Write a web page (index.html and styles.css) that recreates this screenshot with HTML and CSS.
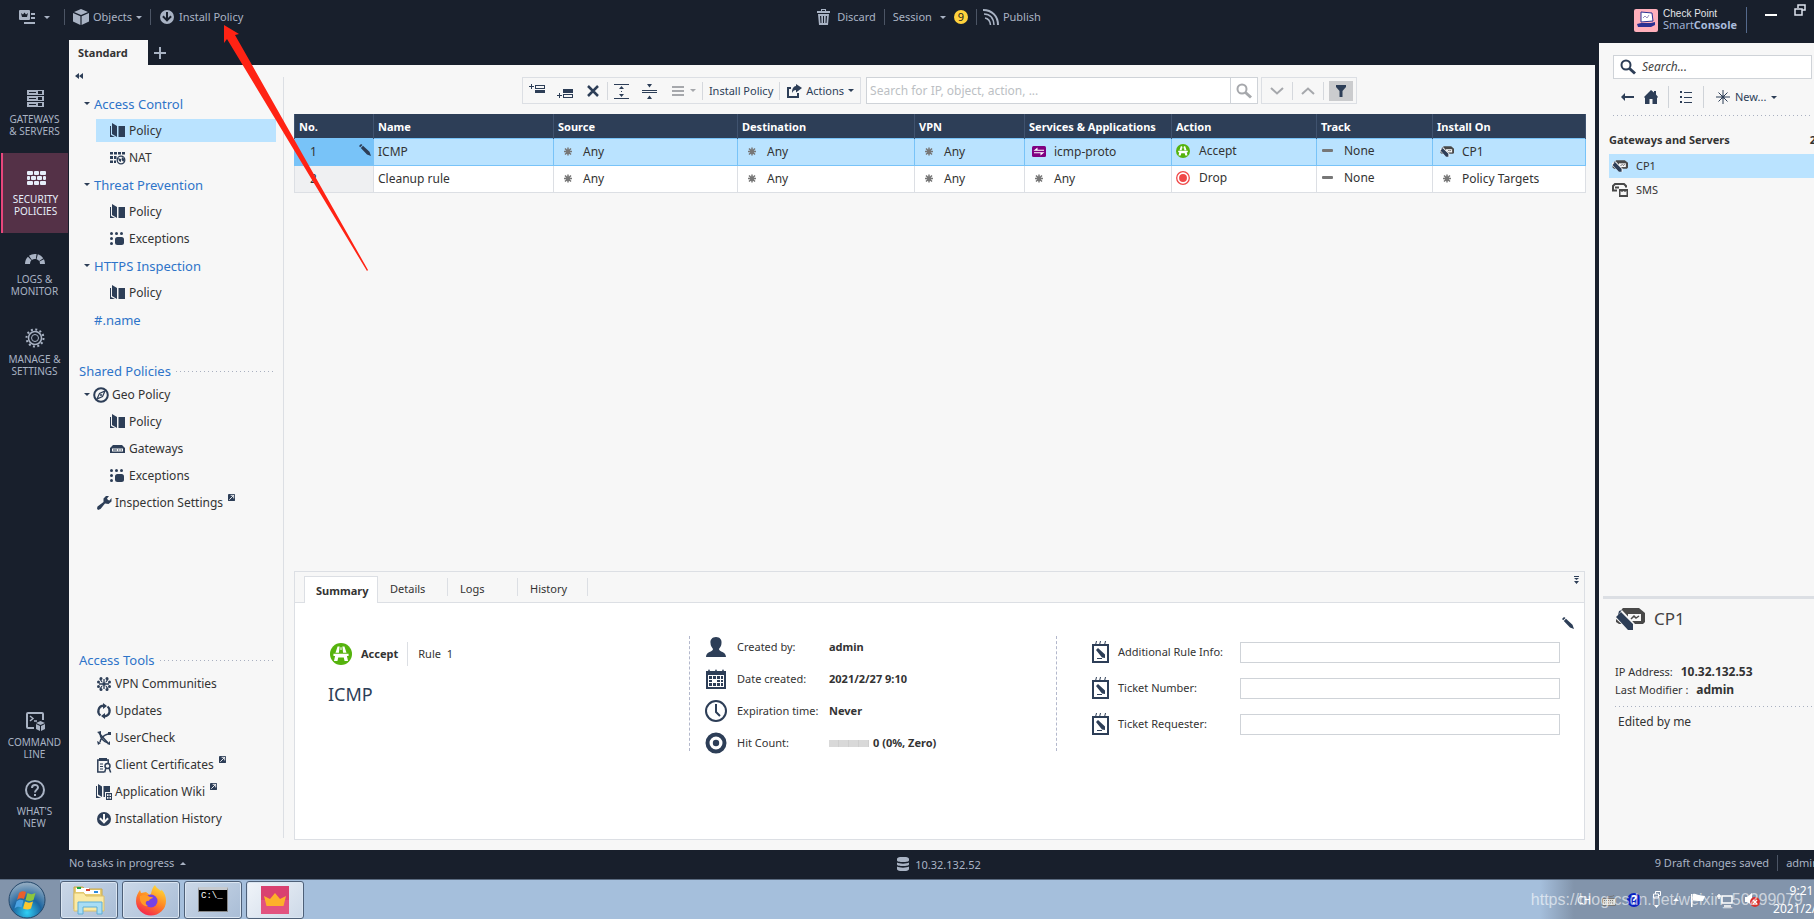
FILE: index.html
```html
<!doctype html>
<html lang="en">
    <head>
        <meta charset="utf-8">
        <title>SmartConsole</title>
        <link rel="stylesheet" href="styles.css">
    </head>
    <body>
        <!-- icon sprite -->
        <svg class="sprite" aria-hidden="true">
            <symbol id="i-menu" viewBox="0 0 16 15"><path fill="currentColor" fill-rule="evenodd" d="M1 0h9a1 1 0 0 1 1 1v8a1 1 0 0 1-1 1H1a1 1 0 0 1-1-1V1a1 1 0 0 1 1-1zm1 3 1 4h5l1-4-2 1.500-1.500-2L4 4.500zM12 3h4v2h-4zM12 7h4v2h-4zM5 12h11v2H5z"/></symbol>
            <symbol id="i-cube" viewBox="0 0 16 16"><path fill="currentColor" d="M8 0l7 3-7 3-7-3zM0 4l7.400 3.300V16L0 12.500zM16 4 8.600 7.300V16l7.400-3.500z"/></symbol>
            <symbol id="i-install" viewBox="0 0 16 16"><path fill="currentColor" fill-rule="evenodd" d="M8 1a7 7 0 1 0 0 14A7 7 0 0 0 8 1zM7 3h2v6l2.400-2.400 1.400 1.400L8 12.800 3.200 8l1.400-1.400L7 9z"/></symbol>
            <symbol id="i-trash" viewBox="0 0 13 16"><path fill="currentColor" fill-rule="evenodd" d="M4 2V0h5v2h4v2H0V2zm1 0h3V1H5zM1 5h11l-1 11H2zm2 2 .5 7h1L4.200 7zm3 0v7h1V7zm2.800 0-.3 7h1L10 7z"/></symbol>
            <symbol id="i-publish" viewBox="0 0 16 16"><g fill="none" stroke="currentColor" stroke-width="2"><path d="M0 1c9 0 15 6 15 15"/><path d="M1 5c6 0 9.500 4 10 11" stroke-width="1.500"/><path d="M2 9c3 .5 5 2 5.500 7" stroke-width="1.500"/></g></symbol>
            <symbol id="i-servers" viewBox="0 0 22 22"><path fill="currentColor" fill-rule="evenodd" d="M3 3h17v5H3zm2 2v1h7V5zm9-1v3h4V4zM3 9h17v5H3zm2 2v1h7v-1zm9-1v3h4v-3zM3 15h17v5H3zm2 2v1h7v-1zm9-1v3h4v-3z"/></symbol>
            <symbol id="i-wall" viewBox="0 0 22 22"><g fill="currentColor"><rect x="2" y="4" width="6" height="4" rx="1"/><rect x="9" y="4" width="5" height="4" rx="1"/><rect x="15" y="4" width="6" height="4" rx="1"/><rect x="2" y="9" width="3" height="4" rx="1"/><rect x="6" y="9" width="5" height="4" rx="1"/><rect x="12" y="9" width="5" height="4" rx="1"/><rect x="18" y="9" width="3" height="4" rx="1"/><rect x="2" y="14" width="6" height="4" rx="1"/><rect x="9" y="14" width="5" height="4" rx="1"/><rect x="15" y="14" width="6" height="4" rx="1"/></g></symbol>
            <symbol id="i-gauge" viewBox="0 0 22 22"><path fill="none" stroke="currentColor" stroke-width="5" stroke-dasharray="6 1 6 1 5 1 20" d="M3.500 17c0-10 15-10 15 0"/></symbol>
            <symbol id="i-gear" viewBox="0 0 22 22"><g fill="none" stroke="currentColor"><circle cx="11" cy="11" r="8.500" stroke-width="2" stroke-dasharray="2 2.450"/><circle cx="11" cy="11" r="6.500" stroke-width="1.500"/><circle cx="11" cy="11" r="3.500"/></g></symbol>
            <symbol id="i-cmd" viewBox="0 0 22 22"><path fill="none" stroke="currentColor" stroke-width="2" d="M10 18H4a1 1 0 0 1-1-1V4a1 1 0 0 1 1-1h14a1 1 0 0 1 1 1v6"/><path fill="none" stroke="currentColor" stroke-width="1.500" d="m6 6 3 2.500L6 11M10 11h3"/><path fill="currentColor" d="m16.500 11 4.500 2-4.500 2-4.500-2zM12 14l4 2v5l-4-2zM21 14l-4 2v5l4-2z"/></symbol>
            <symbol id="i-help" viewBox="0 0 22 22"><g fill="none" stroke="currentColor" stroke-width="2"><circle cx="11" cy="11" r="9"/><path d="M8 9c0-4 6-4 6-.5 0 2.500-3 2-3 5M11 15v2"/></g></symbol>
            <symbol id="i-policy" viewBox="0 0 16 16"><path fill="currentColor" d="M2 0l5 3v11L2 11zM8.500 3H15v11H8.500zM0 3h1v9l4 2H0z"/></symbol>
            <symbol id="i-nat" viewBox="0 0 16 16"><g fill="currentColor"><path d="M0 2h3v2.500H0zM4 2h3v2.500H4zM8 2h3v2.500H8zM12 2h3v2.500h-3zM0 6h3v3H0zM4 6h2.500v3H4zM0 10.500h3V13H0zM4 10.500h2V13H4z"/></g><circle cx="11" cy="10" r="3.800" fill="none" stroke="currentColor" stroke-width="1.300"/><path fill="currentColor" d="M8 8l3 1v3l-2-1zM12 7l2.500 2-1 3-2-2z"/></symbol>
            <symbol id="i-exc" viewBox="0 0 16 16"><g fill="currentColor"><circle cx="1.500" cy="2.500" r="1.500"/><circle cx="6.500" cy="2.500" r="1.500"/><circle cx="11.500" cy="2.500" r="1.500"/><circle cx="1.500" cy="7.500" r="1.500"/><circle cx="1.500" cy="12.500" r="1.500"/><rect x="5" y="6" width="9" height="8" rx="2.500"/></g></symbol>
            <symbol id="i-geo" viewBox="0 0 16 16"><circle cx="8" cy="8" r="6.800" fill="none" stroke="currentColor" stroke-width="2"/><path fill="none" stroke="currentColor" stroke-width="1.200" d="m12 4-2.500 5.500L4 12l2.500-5.500z"/><circle cx="8" cy="8" r="1" fill="currentColor"/></symbol>
            <symbol id="i-gw" viewBox="0 0 16 16"><path fill="currentColor" fill-rule="evenodd" d="M3 4h9l3 3v5H0V7zM2 7.500v3h11v-3zM3 8.500h4v1H3zM8 8.500h1.500v1H8zM10.500 8.500H12v1h-1.500z"/></symbol>
            <symbol id="i-wrench" viewBox="0 0 16 16"><path fill="currentColor" d="M10 1h3l-2 2.500 1 1.500 1.500.5L15.500 3v3.500L12.500 9 9 8.500 4.500 14 2 15 1 13.500 1.500 11.500 7.500 7V3.500z"/></symbol>
            <symbol id="i-ext" viewBox="0 0 8 8"><path fill="currentColor" d="M1 0h6a1 1 0 0 1 1 1v6a1 1 0 0 1-1 1H1a1 1 0 0 1-1-1V1a1 1 0 0 1 1-1z"/><path stroke="#fff" fill="none" d="M3 1.500h3.500V5M6.500 1.500l-5 5"/></symbol>
            <symbol id="i-vpn" viewBox="0 0 16 16"><g fill="none" stroke="currentColor" stroke-width="1.300"><path d="M8 6V3M8 10v3M6 8H3M10 8h3M6 6 4 3M10 6l2-3M6 10l-2 3M10 10l2 3"/></g><g fill="currentColor"><circle cx="8" cy="8" r="2"/><circle cx="5" cy="2.500" r="1.500"/><circle cx="11" cy="2.500" r="1.500"/><circle cx="2.500" cy="6" r="1.500"/><circle cx="13.500" cy="6" r="1.500"/><circle cx="2.500" cy="10.500" r="1.500"/><circle cx="13.500" cy="10.500" r="1.500"/><circle cx="5" cy="13.500" r="1.500"/><circle cx="11" cy="13.500" r="1.500"/></g></symbol>
            <symbol id="i-upd" viewBox="0 0 16 16"><path fill="none" stroke="currentColor" stroke-width="2.200" d="M4.500 12.500A5.500 5.500 0 0 1 7 2.700M11.500 3.500A5.500 5.500 0 0 1 9 13.300"/><path fill="currentColor" d="M7 0l4 3-4 3zM9 10v6l-4-3z"/></symbol>
            <symbol id="i-uc" viewBox="0 0 16 16"><g fill="none" stroke="currentColor" stroke-width="1.500"><path d="M4 3c0 5 4 9 8 10M12 4C8 5 5 8 4 12"/><path d="M3 3l9 10"/></g><path fill="currentColor" d="M1 2l4-1v4zM12 2h3v3h-3zM1 11l4 2-3 2zM11 14l3-3v4z"/></symbol>
            <symbol id="i-cert" viewBox="0 0 16 16"><path fill="none" stroke="currentColor" stroke-width="1.500" d="M8 15H1.800V3h10.400v3"/><path fill="currentColor" d="M3 1h8v3H3zM4 6.500h3v1H4zM4 9h3v1H4zM4 11.500h3v1H4z"/><circle cx="11.500" cy="9" r="2.500" fill="none" stroke="currentColor" stroke-width="1.500"/><path fill="none" stroke="currentColor" stroke-width="1.500" d="m10 11-1.500 4.500M13 11l1.700 4.500"/></symbol>
            <symbol id="i-wiki" viewBox="0 0 16 16"><path fill="currentColor" d="M2 0l4 2.500V13L2 10.500zM0 2h1v10l4 2H0zM7.500 2H14v6H9v5H7.500z"/><path fill="currentColor" fill-rule="evenodd" d="M10 9h6v7h-6zm1 1.200v1.800h1.500v-1.800zm2.500 0v1.800H15v-1.800zM11 13v1.800h1.500V13zm2.500 0v1.800H15V13z"/></symbol>
            <symbol id="i-any" viewBox="0 0 14 11"><path stroke="currentColor" stroke-width="1.500" d="M7 1.500v8M3 5.500h8M4 2.500l6 6M10 2.500l-6 6"/></symbol>
            <symbol id="i-accept" viewBox="0 0 16 16"><circle cx="8" cy="8" r="8" fill="#55b30d"/><path fill="#fff" d="M5.500 2.500H7L6.500 7H4zM10.500 2.500H9L9.500 7H12zM7.600 3h.8v2h-.8zM2.500 7.800h11v1.700h-1.200l.8 3.500h-2.500L10 10.500H6L5.400 13H2.900l.8-3.500H2.500z"/></symbol>
            <symbol id="i-drop" viewBox="0 0 16 16"><circle cx="8" cy="8" r="7.200" fill="#fff" stroke="#f04848" stroke-width="1.500"/><circle cx="8" cy="8" r="4.500" fill="#f04848"/></symbol>
            <symbol id="i-icmp" viewBox="0 0 14 11"><rect width="14" height="11" rx="1.500" fill="#800080"/><path fill="#fff" d="M1.500 4.700 5.500 1.500v2.200H12v1H1.500zM12.500 6.300l-4 3.200V7.300H2v-1z"/></symbol>
            <symbol id="i-cp" viewBox="0 0 30 22"><path fill="#494949" d="M8 0h16l6 5v9l-2 2H4l-3-2V7z"/><path fill="#f7f7f7" d="M13 6h13v7H13z"/><path stroke="#494949" fill="none" stroke-width="1.500" d="m16 11 3-3 2 2 3-2"/><path fill="#f7f7f7" d="M0 6l6-5 14 15v6h-7L0 10z"/><path fill="#2d3e57" d="M1 9l5-5 12 12v6h-5zM4 3l3-1-4 5z"/></symbol>
            <symbol id="i-sms" viewBox="0 0 16 14"><path fill="none" stroke="#494949" stroke-width="2" d="M5 7.500H1V3l2-2h9l2 2v1.500M3 4.500h4"/><path fill="#494949" fill-rule="evenodd" d="M6.500 6H16v8H7V6zm2 2v4h6V8l-1.500 1-1.500-1-1.500 1z"/></symbol>
            <symbol id="i-pencil" viewBox="0 0 12 12"><path fill="currentColor" d="M0 2 2 0l1.500 1-2.300 2.300zM1.800 4 4 1.800l6.500 6L12 12 8 10.500z"/></symbol>
            <symbol id="i-addup" viewBox="0 0 16 16"><path fill="currentColor" fill-rule="evenodd" d="M2 1h1v2h2v1H3v2H2V4H0V3h2zM6 2h10v4H6zm1 1v2h8V3zM6 7h10v3H6z"/></symbol>
            <symbol id="i-adddn" viewBox="0 0 16 16"><path fill="currentColor" fill-rule="evenodd" d="M2 10h1v2h2v1H3v2H2v-2H0v-1h2zM6 6h10v4H6zM6 11h10v4H6zm1 1v2h8v-2z"/></symbol>
            <symbol id="i-x" viewBox="0 0 16 16"><path stroke="currentColor" stroke-width="2.500" d="m3 3 10 10M13 3 3 13"/></symbol>
            <symbol id="i-expand" viewBox="0 0 16 16"><path fill="currentColor" d="M0 1h15v1H0zM0 15h15v1H0zM5 6l2.500-3L10 6zM5 11l2.500 3 2.500-3zM7 8h1v1H7z"/></symbol>
            <symbol id="i-collapse" viewBox="0 0 16 16"><path fill="currentColor" d="M0 7h15v1H0zM0 9h15v1H0zM5 1h5L7.500 4.500zM5 16h5l-2.500-3.500z"/></symbol>
            <symbol id="i-lines" viewBox="0 0 16 16"><path fill="currentColor" d="M2 3h12v2H2zM2 7h12v2H2zM2 11h12v2H2z"/></symbol>
            <symbol id="i-share" viewBox="0 0 16 16"><path fill="none" stroke="currentColor" stroke-width="2" d="M5 5H2v9h10v-4"/><path fill="currentColor" d="M10 1l6 4-6 4.500V7C8 7 7 8 6 10c0-4 1-6.500 4-7z"/></symbol>
            <symbol id="i-glass" viewBox="0 0 16 16"><circle cx="6" cy="6" r="4.500" fill="none" stroke="currentColor" stroke-width="2"/><path stroke="currentColor" stroke-width="3" d="m9.500 9.500 5.500 5"/></symbol>
            <symbol id="i-down" viewBox="0 0 14 14"><path fill="none" stroke="currentColor" stroke-width="2" d="m1 4 6 5.500L13 4"/></symbol>
            <symbol id="i-up" viewBox="0 0 14 14"><path fill="none" stroke="currentColor" stroke-width="2" d="m1 10 6-5.500 6 5.500"/></symbol>
            <symbol id="i-filter" viewBox="0 0 14 14"><path fill="currentColor" d="M2 1h10v2L8.500 7v6h-3V7L2 3z"/></symbol>
            <symbol id="i-back" viewBox="0 0 14 14"><path fill="currentColor" d="M5 3v3h9v2H5v3L1 7z"/></symbol>
            <symbol id="i-home" viewBox="0 0 14 14"><path fill="currentColor" fill-rule="evenodd" d="M7 0l3 2.500V1h2v3.500L14 7l-1 1v6H1V8L0 7zM5.500 9v5h3V9z"/></symbol>
            <symbol id="i-list" viewBox="0 0 14 14"><path fill="currentColor" d="M1 1h2v2H1zM5 2h8v1H5zM1 6h2v2H1zM5 7h8v1H5zM1 11h2v2H1zM5 12h8v1H5z"/></symbol>
            <symbol id="i-new" viewBox="0 0 14 14"><path stroke="currentColor" d="M7 0v14M0 7h14M2.500 2.500l9 9M11.500 2.500l-9 9"/><circle cx="7" cy="7" r="1.500" fill="currentColor"/></symbol>
            <symbol id="i-user" viewBox="0 0 22 22"><path fill="currentColor" d="M11 1c4 0 6 3 5.500 6 0 3-1.500 4-2.500 6 0 3 7 2.500 7 8H1c0-5.500 7-5 7-8-1-2-2.500-3-2.500-6C5 4 7 1 11 1z"/></symbol>
            <symbol id="i-cal" viewBox="0 0 22 22"><path fill="currentColor" d="M1 3h2l1-2 1 2h5l1-2 1 2h5l1-2 1 2h2v18H1z"/><path fill="#fff" d="M3 7h16v12H3z"/><path fill="currentColor" d="M4 8h3v3H4zM8 8h3v3H8zM12 8h3v3h-3zM16 8h2v3h-2zM4 12h3v2H4zM12 12h3v2h-3zM16 12h2v2h-2zM4 15h3v3H4zM8 15h3v3H8zM12 15h3v3h-3zM16 15h2v3h-2z"/></symbol>
            <symbol id="i-clock" viewBox="0 0 22 22"><circle cx="11" cy="11" r="10" fill="none" stroke="currentColor" stroke-width="2"/><path fill="none" stroke="currentColor" stroke-width="2" d="M11 4v8l4 4"/></symbol>
            <symbol id="i-target" viewBox="0 0 22 22"><circle cx="11" cy="11" r="8.500" fill="none" stroke="currentColor" stroke-width="4"/><circle cx="11" cy="11" r="3.200" fill="currentColor"/></symbol>
            <symbol id="i-note" viewBox="0 0 18 22"><path fill="none" stroke="currentColor" stroke-width="2" d="M1 3v18h15V3M1 4h15"/><path stroke="currentColor" d="m4.500 0-1 4M8.500 0l-1 4M13.500 0l-1 4"/><path fill="currentColor" d="M4 9l2-2 7 6.500V17l-3-.5zM5 17h5v1H5z"/></symbol>
            <symbol id="i-db" viewBox="0 0 12 14"><path fill="currentColor" d="M0 2c0-3 12-3 12 0v1.500c0 2-12 2-12 0zM0 5.500c2 1.500 10 1.500 12 0v2c0 2-12 2-12 0zM0 9.500c2 1.500 10 1.500 12 0V12c0 3-12 3-12 0z"/></symbol>
            <symbol id="i-crown" viewBox="0 0 28 28"><path fill="#d94070" d="M0 0h28v14H0z"/><path fill="#e2527f" d="M0 14h28v14H0z"/><path fill="#fdb02a" d="M3 10l6 3 5-6 5 6 6-3-2.500 10h-17z"/></symbol>
        </svg>

        <header class="topbar">
            <div class="topbar-group">
                <button class="top-btn menu" aria-label="Menu"><svg width="16" height="15"><use href="#i-menu"/></svg><i class="caret"></i></button>
                <span class="sep"></span>
                <button class="top-btn"><svg width="16" height="16"><use href="#i-cube"/></svg>Objects<i class="caret"></i></button>
                <span class="sep"></span>
                <button class="top-btn"><svg width="16" height="16"><use href="#i-install"/></svg>Install Policy</button>
            </div>
            <div class="topbar-group session-bar">
                <button class="top-btn discard"><svg width="13" height="16"><use href="#i-trash"/></svg>Discard</button>
                <span class="sep"></span>
                <button class="top-btn session">Session<i class="caret"></i></button>
                <span class="count">9</span>
                <span class="sep"></span>
                <button class="top-btn publish"><svg width="16" height="16"><use href="#i-publish"/></svg>Publish</button>
            </div>
            <div class="topbar-group brand">
                <svg width="24" height="23" viewBox="0 0 24 23"><rect width="24" height="23" rx="2" fill="#ffafbb"/><path fill="#fff" stroke="#2b3092" d="m7 3 11 1 1 8-12 1z"/><path fill="#2b3092" d="m3 15 4-1h10l4-1v3l-4 2H4z"/><path stroke="#9b90c0" fill="none" d="m9 9 2-2 2 2 2-3"/></svg>
                <div class="brand-name"><div class="brand-top">Check Point</div><div class="brand-sub">Smart<b>Console</b></div></div>
                <span class="brand-sep"></span>
                <button class="win-btn" aria-label="Minimize"><svg width="12" height="12"><path fill="#fff" d="M0 8h12v2H0z"/></svg></button>
                <button class="win-btn" aria-label="Restore"><svg width="12" height="12"><path fill="none" stroke="#dde4ee" stroke-width="1.500" d="M4 4V1h7v5H8M1 5h7v6H1z"/></svg></button>
            </div>
        </header>

        <div class="app">
            <nav class="rail">
                <a class="rail-item" href="#"><svg width="22" height="22"><use href="#i-servers"/></svg>GATEWAYS<br>&amp; SERVERS</a>
                <a class="rail-item active" href="#"><svg width="22" height="22"><use href="#i-wall"/></svg>SECURITY<br>POLICIES</a>
                <a class="rail-item" href="#"><svg width="22" height="22"><use href="#i-gauge"/></svg>LOGS &amp;<br>MONITOR</a>
                <a class="rail-item" href="#"><svg width="22" height="22"><use href="#i-gear"/></svg>MANAGE &amp;<br>SETTINGS</a>
                <div class="rail-bottom">
                    <a class="rail-item" href="#"><svg width="22" height="22"><use href="#i-cmd"/></svg>COMMAND<br>LINE</a>
                    <a class="rail-item" href="#"><svg width="22" height="22"><use href="#i-help"/></svg>WHAT'S<br>NEW</a>
                </div>
            </nav>

            <main class="center">
                <div class="tabs">
                    <button class="tab">Standard</button>
                    <button class="tab-add" aria-label="New tab"><svg width="12" height="12"><path fill="currentColor" d="M5 0h2v5h5v2H7v5H5V7H0V5h5z"/></svg></button>
                </div>
                <div class="workspace">
                    <aside class="tree">
                        <button class="collapse" aria-label="Collapse"><svg width="8" height="6"><path fill="currentColor" d="M4 0v6L0 3zM8 0v6L4 3z"/></svg></button>
                        <div class="tree-group">
                            <a class="node top" href="#"><i class="caret"></i>Access Control</a>
                            <a class="node leaf selected" href="#"><svg class="ico"><use href="#i-policy"/></svg>Policy</a>
                            <a class="node leaf" href="#"><svg class="ico"><use href="#i-nat"/></svg>NAT</a>
                            <a class="node top" href="#"><i class="caret"></i>Threat Prevention</a>
                            <a class="node leaf" href="#"><svg class="ico"><use href="#i-policy"/></svg>Policy</a>
                            <a class="node leaf" href="#"><svg class="ico"><use href="#i-exc"/></svg>Exceptions</a>
                            <a class="node top" href="#"><i class="caret"></i>HTTPS Inspection</a>
                            <a class="node leaf" href="#"><svg class="ico"><use href="#i-policy"/></svg>Policy</a>
                            <a class="node top plain" href="#">#.name</a>
                        </div>
                        <div class="tree-group shared">
                            <h2>Shared Policies</h2>
                            <a class="node mid open" href="#"><i class="caret"></i><svg class="ico"><use href="#i-geo"/></svg>Geo Policy</a>
                            <a class="node leaf" href="#"><svg class="ico"><use href="#i-policy"/></svg>Policy</a>
                            <a class="node leaf" href="#"><svg class="ico"><use href="#i-gw"/></svg>Gateways</a>
                            <a class="node leaf" href="#"><svg class="ico"><use href="#i-exc"/></svg>Exceptions</a>
                            <a class="node mid" href="#"><svg class="ico"><use href="#i-wrench"/></svg>Inspection Settings<svg class="ext"><use href="#i-ext"/></svg></a>
                        </div>
                        <div class="tree-group tools">
                            <h2>Access Tools</h2>
                            <a class="node mid" href="#"><svg class="ico"><use href="#i-vpn"/></svg>VPN Communities</a>
                            <a class="node mid" href="#"><svg class="ico"><use href="#i-upd"/></svg>Updates</a>
                            <a class="node mid" href="#"><svg class="ico"><use href="#i-uc"/></svg>UserCheck</a>
                            <a class="node mid" href="#"><svg class="ico"><use href="#i-cert"/></svg>Client Certificates<svg class="ext"><use href="#i-ext"/></svg></a>
                            <a class="node mid" href="#"><svg class="ico"><use href="#i-wiki"/></svg>Application Wiki<svg class="ext"><use href="#i-ext"/></svg></a>
                            <a class="node mid" href="#"><svg class="ico"><use href="#i-install"/></svg>Installation History</a>
                        </div>
                    </aside>

                    <section class="policy">
                        <div class="toolbar">
                            <div class="tool-group">
                                <button aria-label="Add rule above"><svg class="ico"><use href="#i-addup"/></svg></button>
                                <button aria-label="Add rule below"><svg class="ico"><use href="#i-adddn"/></svg></button>
                                <button aria-label="Delete rule"><svg class="ico"><use href="#i-x"/></svg></button>
                                <span class="sep"></span>
                                <button aria-label="Expand"><svg class="ico"><use href="#i-expand"/></svg></button>
                                <button aria-label="Collapse"><svg class="ico"><use href="#i-collapse"/></svg></button>
                                <button class="muted" aria-label="Display"><svg class="ico"><use href="#i-lines"/></svg><i class="caret"></i></button>
                                <span class="sep"></span>
                                <button>Install Policy</button>
                                <span class="sep"></span>
                                <button><svg class="ico"><use href="#i-share"/></svg>Actions<i class="caret"></i></button>
                            </div>
                            <div class="rule-search">
                                <input type="text" aria-label="Search rules" placeholder="Search for IP, object, action, ...">
                                <button aria-label="Search"><svg class="ico"><use href="#i-glass"/></svg></button>
                            </div>
                            <div class="nav-group">
                                <button aria-label="Next"><svg width="14" height="14"><use href="#i-down"/></svg></button>
                                <span class="sep"></span>
                                <button aria-label="Previous"><svg width="14" height="14"><use href="#i-up"/></svg></button>
                                <span class="sep"></span>
                                <button class="on" aria-label="Filter"><svg width="14" height="14"><use href="#i-filter"/></svg></button>
                            </div>
                        </div>

                        <table class="rules">
                            <colgroup><col class="c-no"><col class="c-name"><col class="c-src"><col class="c-dst"><col class="c-vpn"><col class="c-svc"><col class="c-act"><col class="c-trk"><col class="c-ins"></colgroup>
                            <thead>
                                <tr><th>No.</th><th>Name</th><th>Source</th><th>Destination</th><th>VPN</th><th>Services &amp; Applications</th><th>Action</th><th>Track</th><th>Install On</th></tr>
                            </thead>
                            <tbody>
                                <tr class="selected">
                                    <td><div class="num">1<svg width="12" height="12"><use href="#i-pencil"/></svg></div></td>
                                    <td>ICMP</td>
                                    <td><div class="cell"><svg class="any"><use href="#i-any"/></svg>Any</div></td>
                                    <td><div class="cell"><svg class="any"><use href="#i-any"/></svg>Any</div></td>
                                    <td><div class="cell"><svg class="any"><use href="#i-any"/></svg>Any</div></td>
                                    <td><div class="cell"><svg class="any"><use href="#i-icmp"/></svg>icmp-proto</div></td>
                                    <td><div class="cell act"><svg class="dot"><use href="#i-accept"/></svg>Accept</div></td>
                                    <td><div class="cell trk"><i class="dash"></i>None</div></td>
                                    <td><div class="cell"><svg class="any"><use href="#i-cp"/></svg>CP1</div></td>
                                </tr>
                                <tr>
                                    <td><div class="num">2</div></td>
                                    <td>Cleanup rule</td>
                                    <td><div class="cell"><svg class="any"><use href="#i-any"/></svg>Any</div></td>
                                    <td><div class="cell"><svg class="any"><use href="#i-any"/></svg>Any</div></td>
                                    <td><div class="cell"><svg class="any"><use href="#i-any"/></svg>Any</div></td>
                                    <td><div class="cell"><svg class="any"><use href="#i-any"/></svg>Any</div></td>
                                    <td><div class="cell act"><svg class="dot"><use href="#i-drop"/></svg>Drop</div></td>
                                    <td><div class="cell trk"><i class="dash"></i>None</div></td>
                                    <td><div class="cell"><svg class="any"><use href="#i-any"/></svg>Policy Targets</div></td>
                                </tr>
                            </tbody>
                        </table>

                        <div class="details">
                            <div class="detail-tabs">
                                <button class="dtab active">Summary</button>
                                <button class="dtab">Details</button>
                                <button class="dtab">Logs</button>
                                <button class="dtab">History</button>
                                <button class="fold" aria-label="Collapse panel"><svg width="7" height="8"><path fill="currentColor" d="M1 0h5v1H1zM1 2h5L3.500 4zM1 5h5L3.500 8z"/></svg></button>
                            </div>
                            <div class="detail-body">
                                <div class="summary">
                                    <div class="verdict"><svg width="22" height="22"><use href="#i-accept"/></svg><b>Accept</b><span>Rule&nbsp; 1</span></div>
                                    <h1>ICMP</h1>
                                </div>
                                <dl class="facts">
                                    <div><svg width="22" height="22"><use href="#i-user"/></svg><dt>Created by:</dt><dd>admin</dd></div>
                                    <div><svg width="22" height="22"><use href="#i-cal"/></svg><dt>Date created:</dt><dd>2021/2/27 9:10</dd></div>
                                    <div><svg width="22" height="22"><use href="#i-clock"/></svg><dt>Expiration time:</dt><dd>Never</dd></div>
                                    <div><svg width="22" height="22"><use href="#i-target"/></svg><dt>Hit Count:</dt><dd><i class="hits"></i>0 (0%, Zero)</dd></div>
                                </dl>
                                <form class="ticket">
                                    <div><svg width="18" height="22"><use href="#i-note"/></svg><label for="info">Additional Rule Info:</label><input id="info" type="text"></div>
                                    <div><svg width="18" height="22"><use href="#i-note"/></svg><label for="number">Ticket Number:</label><input id="number" type="text"></div>
                                    <div><svg width="18" height="22"><use href="#i-note"/></svg><label for="requester">Ticket Requester:</label><input id="requester" type="text"></div>
                                </form>
                                <button class="edit" aria-label="Edit"><svg width="12" height="12"><use href="#i-pencil"/></svg></button>
                            </div>
                        </div>
                    </section>
                </div>
            </main>

            <aside class="objects">
                <div class="objects-list">
                    <div class="obj-search"><svg class="ico"><use href="#i-glass"/></svg><input type="text" aria-label="Search objects" placeholder="Search..."></div>
                    <div class="obj-tools">
                        <button aria-label="Back"><svg width="14" height="14"><use href="#i-back"/></svg></button>
                        <button aria-label="Home"><svg width="14" height="14"><use href="#i-home"/></svg></button>
                        <span class="sep"></span>
                        <button aria-label="List"><svg width="14" height="14"><use href="#i-list"/></svg></button>
                        <span class="sep"></span>
                        <button class="new"><svg width="14" height="14"><use href="#i-new"/></svg>New...<i class="caret"></i></button>
                    </div>
                    <div class="dots"></div>
                    <div class="obj-head"><span>Gateways and Servers</span><span>2</span></div>
                    <a class="obj selected" href="#"><svg class="ico"><use href="#i-cp"/></svg>CP1</a>
                    <a class="obj" href="#"><svg class="ico"><use href="#i-sms"/></svg>SMS</a>
                </div>
                <div class="obj-info">
                    <div class="obj-title"><svg width="30" height="22"><use href="#i-cp"/></svg>CP1</div>
                    <p>IP Address: <b>10.32.132.53</b></p>
                    <p>Last Modifier : <b>admin</b></p>
                    <div class="dots"></div>
                    <p class="edited">Edited by me</p>
                </div>
            </aside>
        </div>

        <footer class="status">
            <button class="tasks">No tasks in progress<i class="caret up"></i></button>
            <span class="server"><svg width="12" height="14"><use href="#i-db"/></svg>10.32.132.52</span>
            <span class="draft"><span>9 Draft changes saved</span><span class="sep"></span><span>admin</span></span>
        </footer>

        <div class="taskbar">
            <button class="start" aria-label="Start"><svg width="38" height="38" viewBox="0 0 38 38">
                <defs><radialGradient id="orb" cx=".5" cy=".85" r=".8"><stop offset="0" stop-color="#2fd0f5"/><stop offset=".5" stop-color="#1c65a0"/><stop offset="1" stop-color="#8fa9c0"/></radialGradient></defs>
                <circle cx="19" cy="19" r="18" fill="url(#orb)" stroke="#24486b"/>
                <path fill="#e8602c" d="M11 12c2-2 5-2 7-1l-2 7c-2-1-5-1-7 1z"/><path fill="#8cc63e" d="M19.500 12c3 1.500 5 1.500 8 0l-2 7c-3 1.500-5 1-8 0z"/><path fill="#4ba3e3" d="M8.500 20.500c2-2 5-2 7-1l-2 7c-2-1-5-1-7 1z"/><path fill="#fcc82f" d="M17 20.500c3 1.500 5 1.500 8 0l-2 7c-3 1.500-5 1-8 0z"/>
            </svg></button>
            <button class="task" aria-label="Explorer"><svg width="34" height="32" viewBox="0 0 34 32">
                <path fill="#e9cf74" stroke="#c9a84c" d="M2 3h9l2 2h17v20H2z"/><path fill="#fff" d="M4 4h13v4H4zM12 6h16v4H12z"/><path fill="#1ba53a" d="M5 3h4v2H5z"/><path fill="#d8432c" d="M14 5h4v2h-4z"/><path fill="#2b8be0" d="M22 7h4v2h-4z"/><path fill="#fbeaa5" stroke="#dcc06a" d="M2 9h10l2 3h18v15H2z"/><path fill="#a8ddf5" stroke="#5faed6" d="M6 18h24v12h-5v-7H11v7H6z"/>
            </svg></button>
            <button class="task" aria-label="Firefox"><svg width="32" height="32" viewBox="0 0 32 32">
                <defs><linearGradient id="fox" x1="0.800" y1="0" x2="0.300" y2="1"><stop offset="0" stop-color="#ffe03a"/><stop offset=".5" stop-color="#ff8a24"/><stop offset="1" stop-color="#f5234f"/></linearGradient></defs>
                <path fill="url(#fox)" d="M20 1c1 3 4 4 6 6 1-1 0-2 0-2 4 4 5 8 5 12a15 14.500 0 0 1-30 0c0-5 2-8 4-11l1 3 5-1 4 3c2-2 1-6 5-10z"/><circle cx="16" cy="17" r="6.500" fill="#7542e5"/><path fill="#ff9a28" d="M5 12c4-2 7-1 10 1 2 0 3 0 3 1-2 1-4 1-4 3-3-1-5 3-1 5-5 1-9-4-8-10z"/>
            </svg></button>
            <button class="task" aria-label="Command prompt"><span class="cmd">C:\_</span></button>
            <button class="task current" aria-label="SmartConsole"><svg width="28" height="28"><use href="#i-crown"/></svg></button>
            <div class="tray">
                <span class="lang">CH</span>
                <svg width="14" height="12" viewBox="0 0 14 12"><path fill="#d8d8d2" stroke="#777" d="M.5 4.500h13v7H.5z"/><path stroke="#777" stroke-dasharray="1 1" d="M2 6.500h10M2 9h10"/><path fill="none" stroke="#777" d="M4 4c0-3 7 0 8-3"/></svg>
                <span class="tray-help">?</span>
                <svg width="10" height="20" viewBox="0 0 10 20"><path fill="none" stroke="#fff" d="M3.500 4V1.500h5v4H6M1.500 4h5v4h-5z"/><path fill="#fff" d="M2 15h5l-2.500 3z"/></svg>
                <i class="caret up"></i>
                <svg width="16" height="14" viewBox="0 0 16 14"><path fill="#fff" d="M1 1h1.500v13H1zM3 1c3-1 4 1 6 1s3 1 6 1l-2 5H8L3 7z"/></svg>
                <svg width="16" height="14" viewBox="0 0 16 14"><path fill="#8294ab" stroke="#fff" stroke-width="1.500" d="M5 3h10v7H5zM7 13h7M2 1v5M0 3h4"/></svg>
                <svg width="16" height="14" viewBox="0 0 16 14"><path fill="#fff" d="M1 4h2l5-4v12L3 9H1z"/><circle cx="11" cy="9" r="5" fill="#d9302c"/><path stroke="#fff" stroke-width="1.500" d="m9 7 4 4M13 7l-4 4"/></svg>
                <span class="clock">9:21<br>2021/2/27</span>
            </div>
            <span class="watermark">https://blog.csdn.net/weixin_50299079</span>
        </div>

        <svg class="arrow" width="150" height="250" viewBox="220 24 150 250" aria-hidden="true"><path fill="#ff2314" d="m224 25 15 9-4 1 133 235-1 1L227 39l-3 4z"/></svg>
    </body>
</html>
```

FILE: styles.css
```css
* {
    box-sizing: border-box;
}

html, body {
    height: 100%;
}

body {
    margin: 0;
    display: flex;
    flex-direction: column;
    position: relative;
    overflow: hidden;
    background: #181f2c;
    color: #333;
    font-family: "Noto Sans", "Open Sans", sans-serif;
    font-size: 12px;
    line-height: 16px;
    white-space: nowrap;
}

button, input {
    font: inherit;
    color: inherit;
    background: none;
    border: 0;
    padding: 0;
    margin: 0;
}

button {
    display: flex;
    align-items: center;
    flex: none;
}

a {
    color: inherit;
    text-decoration: none;
}

svg {
    flex: none;
    display: block;
}

.sprite {
    position: absolute;
    width: 0;
    height: 0;
}

.ico {
    width: 16px;
    height: 16px;
}

.caret {
    width: 0;
    height: 0;
    flex: none;
    border: 3px solid transparent;
    border-top-color: currentColor;
    border-bottom: 0;
}

.caret.up {
    border-top: 0;
    border-bottom: 3px solid currentColor;
}

.sep {
    width: 1px;
    height: 16px;
    flex: none;
    background: #4c5565;
}

.dots, .tree h2::after {
    height: 1px;
    background: repeating-linear-gradient(90deg, #a9b0c0 0 1px, transparent 1px 4px);
}

/* top bar */
.topbar {
    display: grid;
    grid-template-columns: 1fr auto 1fr;
    height: 34px;
    flex: none;
    color: #a9b3c4;
    font-size: 11px;
}

.topbar-group {
    display: flex;
    align-items: center;
}

.top-btn {
    gap: 4px;
    padding: 0 8px;
}

.menu {
    gap: 9px;
    padding: 0 14px 0 19px;
}

.session-bar {
    margin-left: 42px;
}

.discard {
    gap: 7px;
}

.session {
    gap: 8px;
}

.count {
    width: 14px;
    height: 14px;
    margin-right: 8px;
    border-radius: 7px;
    background: #ffd23c;
    color: #222;
    line-height: 14px;
    text-align: center;
}

.publish {
    padding: 0 6px;
}

.brand {
    justify-content: flex-end;
    align-items: flex-start;
    padding: 4px 8px 0 0;
}

.brand > svg {
    margin-top: 5px;
}

.brand-name {
    margin: 4px 9px 0 5px;
    font-family: "Liberation Sans", sans-serif;
    font-size: 10px;
    line-height: 11px;
    color: #e4e6ea;
}

.brand-sub {
    font-family: "Open Sans", sans-serif;
    font-size: 11px;
    color: #a9bbdc;
}

.brand-sep {
    width: 1px;
    height: 26px;
    margin: 3px 18px 0 0;
    background: #54698c;
}

.win-btn {
    margin-left: 17px;
}

.brand-sep + .win-btn {
    margin-left: 0;
    margin-top: 2px;
}

/* main layout */
.app {
    display: flex;
    flex: 1;
    min-height: 0;
}

.rail {
    width: 69px;
    flex: none;
    display: flex;
    flex-direction: column;
    padding-top: 39px;
    color: #a9b3c4;
}

.rail-item {
    display: block;
    height: 80px;
    padding-top: 14px;
    font-size: 10px;
    line-height: 12px;
    text-align: center;
}

.rail-item svg {
    margin: 0 auto 4px;
}

.rail-item.active {
    margin: 0 1px;
    border-left: 2px solid #e8467c;
    background: #543147;
    color: #e6eefa;
}

.rail-bottom {
    margin-top: auto;
    padding-bottom: 17px;
}

.rail-bottom .rail-item {
    height: 69px;
    padding-top: 0;
}

.rail-bottom .rail-item:last-child {
    height: 54px;
}

.center {
    flex: 1;
    min-width: 0;
    display: flex;
    flex-direction: column;
}

.tabs {
    display: flex;
    height: 31px;
    flex: none;
    padding-top: 6px;
}

.tab {
    width: 79px;
    padding-left: 9px;
    background: #f7f7f7;
    font-size: 11px;
    font-weight: bold;
}

.tab-add {
    margin-left: 6px;
    color: #a9b3c4;
}

.workspace {
    flex: 1;
    min-height: 0;
    display: flex;
    background: #f7f7f7;
}

/* policy tree */
.tree {
    width: 215px;
    flex: none;
    display: flex;
    flex-direction: column;
    padding: 8px 8px 20px 0;
    background: linear-gradient(#dcdfe4, #dcdfe4) right center / 1px calc(100% - 24px) no-repeat;
}

.collapse {
    height: 6px;
    margin: 0 0 13px 6px;
    color: #2d3e57;
}

.node {
    height: 23px;
    margin: 0 0 4px 27px;
    display: flex;
    align-items: center;
}

.node .ico {
    color: #2d3e57;
}

.node.top {
    margin-left: 15px;
    gap: 4px;
    font-size: 13px;
    color: #2e74c9;
}

.node .caret {
    color: #2d3e57;
}

.node.plain {
    padding-left: 10px;
}

.node.leaf {
    padding-left: 14px;
    gap: 3px;
}

.node.mid {
    gap: 3px;
}

.node.open {
    margin-left: 15px;
}

.node.selected {
    background: #bae3ff;
}

.ext {
    width: 7px;
    height: 7px;
    margin: 0 0 10px 2px;
    color: #2d3e57;
}

.shared {
    margin-top: 25px;
}

.tools {
    margin-top: auto;
}

.tree h2 {
    display: flex;
    align-items: center;
    gap: 5px;
    margin: 0 0 1px 10px;
    height: 22px;
    color: #2e74c9;
    font-size: 13px;
    font-weight: normal;
}

.tree h2::after {
    content: "";
    flex: 1;
}

.tools .node:last-child {
    margin-bottom: 0;
}

/* rule base */
.policy {
    flex: 1;
    min-width: 0;
    display: flex;
    flex-direction: column;
    padding: 12px 10px 10px;
}

.toolbar {
    display: flex;
    justify-content: center;
    height: 27px;
    margin-bottom: 10px;
    flex: none;
    color: #2d3e57;
    font-size: 11px;
}

.toolbar .sep {
    height: 18px;
    background: #d5d8dd;
}

.tool-group, .nav-group, .rule-search {
    display: flex;
    align-items: center;
    border: 1px solid #dcdfe4;
}

.tool-group {
    gap: 12px;
    padding: 0 6px;
    margin-right: 5px;
}

.tool-group button {
    gap: 4px;
}

.tool-group .sep {
    margin: 0 -6px;
}

.muted {
    color: #a6a8ac;
}

.rule-search {
    flex: 0 1 392px;
    margin-right: 3px;
    background: #fff;
    border-color: #cfd3d8;
}

.rule-search input {
    flex: 1;
    min-width: 0;
    height: 25px;
    padding-left: 3px;
    font-size: 12px;
}

.rule-search input::placeholder {
    color: #bcbfc4;
}

.rule-search button {
    width: 27px;
    height: 25px;
    justify-content: center;
    border-left: 1px solid #cfd3d8;
    color: #a6a8ac;
}

.nav-group {
    gap: 8px;
    padding: 0 3px 0 8px;
    color: #a6a8ac;
}

.nav-group .on {
    width: 24px;
    height: 20px;
    margin-left: -3px;
    justify-content: center;
    background: #cbccce;
    color: #2d3e57;
}

.rules {
    width: 100%;
    table-layout: fixed;
    border-collapse: collapse;
    background: #fff;
}

.c-no { width: 79px; }
.c-name { width: 180px; }
.c-src { width: 184px; }
.c-dst { width: 177px; }
.c-vpn { width: 110px; }
.c-svc { width: 147px; }
.c-act { width: 145px; }
.c-trk { width: 116px; }
.c-ins { width: 153px; }

.rules th {
    height: 24px;
    padding: 3px 4px 0;
    border: 1px solid #40536f;
    border-width: 0 1px;
    background: #2d3e57;
    color: #fff;
    text-align: left;
    font-size: 11px;
}

.rules td {
    height: 27px;
    padding: 0 4px;
    border: 1px solid #dcdfe4;
}

.rules td:first-child {
    background: #eff0f2;
}

.rules .selected td {
    background: #bae3ff;
    border-color: #78c3f8;
}

.rules .selected td:first-child {
    background: #78c3f8;
}

.num {
    display: flex;
    justify-content: space-between;
    align-items: center;
    padding-left: 11px;
}

.num svg {
    margin: -4px -2px 0 0;
    color: #2d3e57;
}

.cell {
    display: flex;
    align-items: center;
    gap: 8px;
    padding-left: 3px;
}

.any {
    width: 14px;
    height: 11px;
    color: #777;
}

.dot {
    width: 14px;
    height: 14px;
}

.act {
    padding: 0 0 2px;
    gap: 9px;
}

.trk {
    padding: 0 0 2px 1px;
    gap: 11px;
}

.dash {
    width: 11px;
    height: 3px;
    border-radius: 1px;
    background: #777;
}

/* rule details */
.details {
    height: 269px;
    flex: none;
    margin-top: auto;
    display: flex;
    flex-direction: column;
    border: 1px solid #dcdfe4;
    background: #fff;
    font-size: 11px;
}

.detail-tabs {
    display: flex;
    align-items: center;
    height: 31px;
    flex: none;
    padding: 0 4px 0 9px;
    background: #f7f7f7;
    border-bottom: 1px solid #dcdfe4;
}

.dtab {
    width: 70px;
    height: 18px;
    padding: 4px 0 0 12px;
    border-right: 1px solid #dcdfe4;
}

.dtab.active {
    width: 74px;
    height: 27px;
    margin: 4px 0 -1px;
    padding: 2px 0 0 11px;
    border: 1px solid #dcdfe4;
    border-bottom: 0;
    background: #fff;
    font-weight: bold;
}

.fold {
    margin: -15px 0 0 auto;
    color: #2d3e57;
}

.detail-body {
    flex: 1;
    display: flex;
    padding: 33px 24px 0 33px;
    position: relative;
}

.summary {
    width: 361px;
    flex: none;
    color: #333;
}

.verdict {
    display: flex;
    align-items: center;
    height: 24px;
    margin: 6px 0 16px 2px;
}

.verdict b {
    margin: 0 9px;
}

.verdict span {
    padding: 4px 0 4px 10px;
    border-left: 1px solid #dcdfe4;
}

.summary h1 {
    margin: 0;
    font-size: 18px;
    line-height: 24px;
    font-weight: normal;
    color: #2d3e57;
}

.facts {
    flex: 1;
    height: 115px;
    margin: 0;
    padding-left: 15px;
    border-left: 1px dashed #b3b8cc;
}

.facts div {
    display: flex;
    align-items: center;
    height: 22px;
    margin-bottom: 10px;
}

.facts svg, .edit, .ticket svg {
    color: #2d3e57;
}

.facts dt {
    width: 92px;
    margin-left: 10px;
}

.facts dd {
    display: flex;
    align-items: center;
    margin: 0;
    font-weight: bold;
}

.hits {
    width: 40px;
    height: 7px;
    margin-right: 4px;
    background: repeating-linear-gradient(90deg, #d9d9d9 0 9px, #cfcfcf 9px 10px);
}

.ticket {
    height: 115px;
    padding: 5px 0 0 35px;
    border-left: 1px dashed #b3b8cc;
}

.ticket div {
    display: flex;
    align-items: center;
    height: 22px;
    margin-bottom: 14px;
}

.ticket label {
    width: 122px;
    margin-left: 8px;
}

.ticket input {
    width: 320px;
    height: 21px;
    border: 1px solid #cfd3d8;
    background: #fff;
}

.edit {
    position: absolute;
    right: 10px;
    top: 14px;
}

/* objects pane */
.objects {
    width: 215px;
    flex: none;
    margin: 9px 0 0 4px;
    display: flex;
    flex-direction: column;
    overflow: hidden;
    background: #f7f7f7;
    font-size: 11px;
}

.objects-list {
    flex: 1;
    padding: 12px 0 0 10px;
}

.obj-search {
    display: flex;
    align-items: center;
    height: 24px;
    margin: 0 2px 0 4px;
    padding-left: 6px;
    border: 1px solid #cfd3d8;
    background: #fff;
    color: #2d3e57;
}

.obj-search input {
    flex: 1;
    min-width: 0;
    padding-left: 6px;
    font-size: 12px;
    font-style: italic;
}

.obj-search input::placeholder {
    color: #444;
}

.obj-tools {
    display: flex;
    align-items: center;
    gap: 10px;
    height: 36px;
    padding-left: 11px;
    color: #2d3e57;
}

.obj-tools .sep {
    height: 22px;
    background: #cfd3d8;
}

.obj-tools .new {
    gap: 5px;
    margin-left: 2px;
}

.objects-list .dots {
    margin: 0 2px 0 4px;
}

.obj-head {
    display: flex;
    justify-content: space-between;
    margin: 16px -2px 6px 0;
    font-weight: bold;
}

.obj {
    display: flex;
    align-items: center;
    gap: 8px;
    height: 24px;
    padding-left: 3px;
}

.obj.selected {
    background: #bae3ff;
}

.obj-info {
    height: 254px;
    margin-left: 4px;
    padding: 8px 2px 0 12px;
    border-top: 3px solid #dcdfe4;
}

.obj-title {
    display: flex;
    align-items: center;
    gap: 9px;
    height: 24px;
    margin-bottom: 33px;
    font-size: 17px;
    color: #444;
}

.obj-info p {
    margin: 0 0 2px;
}

.obj-info b {
    margin-left: 5px;
    font-size: 12px;
}

.obj-info .dots {
    margin-top: 8px;
}

.obj-info .edited {
    padding: 7px 0 0 3px;
    font-size: 12px;
}

/* status bar */
.status {
    display: grid;
    grid-template-columns: 1fr auto 1fr;
    align-items: center;
    height: 29px;
    flex: none;
    padding-left: 69px;
    color: #a9b3c4;
    font-size: 11px;
    overflow: hidden;
}

.tasks {
    gap: 6px;
    margin-bottom: 3px;
}

.server {
    display: flex;
    gap: 6px;
    margin-right: 5px;
}

.draft {
    display: flex;
    align-items: center;
    justify-content: flex-end;
    gap: 8px;
    margin: 0 -5px 3px 0;
}

/* windows taskbar */
.taskbar {
    display: flex;
    align-items: center;
    gap: 4px;
    height: 40px;
    flex: none;
    position: relative;
    overflow: hidden;
    border-top: 1px solid #5a6a80;
    background: linear-gradient(90deg, #8294ab 0 60px, #a5bfdc 60px calc(100% - 274px), #8294ab calc(100% - 240px));
}

.start {
    width: 56px;
    padding-left: 8px;
}

.task {
    width: 58px;
    height: 38px;
    justify-content: center;
    border: 1px solid #4e6078;
    border-radius: 3px;
    background: linear-gradient(135deg, #cbd8e8, #a9bdd6);
    box-shadow: inset 0 0 0 1px #dbe6f2;
}

.task.current {
    background: linear-gradient(135deg, #f0f4f9, #cdd9e8);
}

.cmd {
    width: 30px;
    height: 25px;
    padding-left: 2px;
    border: 1px solid #888;
    border-top: 3px solid #c5c9ce;
    background: #000;
    color: #fff;
    font: 9px/12px "Liberation Mono", monospace;
    text-align: left;
}

.tray {
    display: flex;
    align-items: center;
    gap: 11px;
    margin: 0 -16px 0 auto;
    color: #fff;
}

.lang {
    font-size: 10px;
}

.tray-help {
    width: 14px;
    height: 14px;
    border-radius: 7px;
    background: #0a1fc0;
    font-weight: bold;
    line-height: 14px;
    text-align: center;
}

.clock {
    margin-left: 2px;
    line-height: 18px;
    text-align: center;
}

.watermark {
    position: absolute;
    right: 11px;
    top: 10px;
    color: rgba(255, 255, 255, 0.6);
    font: 16px/20px "Liberation Sans", sans-serif;
}

/* red pointer drawn over the window */
.arrow {
    position: absolute;
    left: 220px;
    top: 24px;
    pointer-events: none;
}
```
